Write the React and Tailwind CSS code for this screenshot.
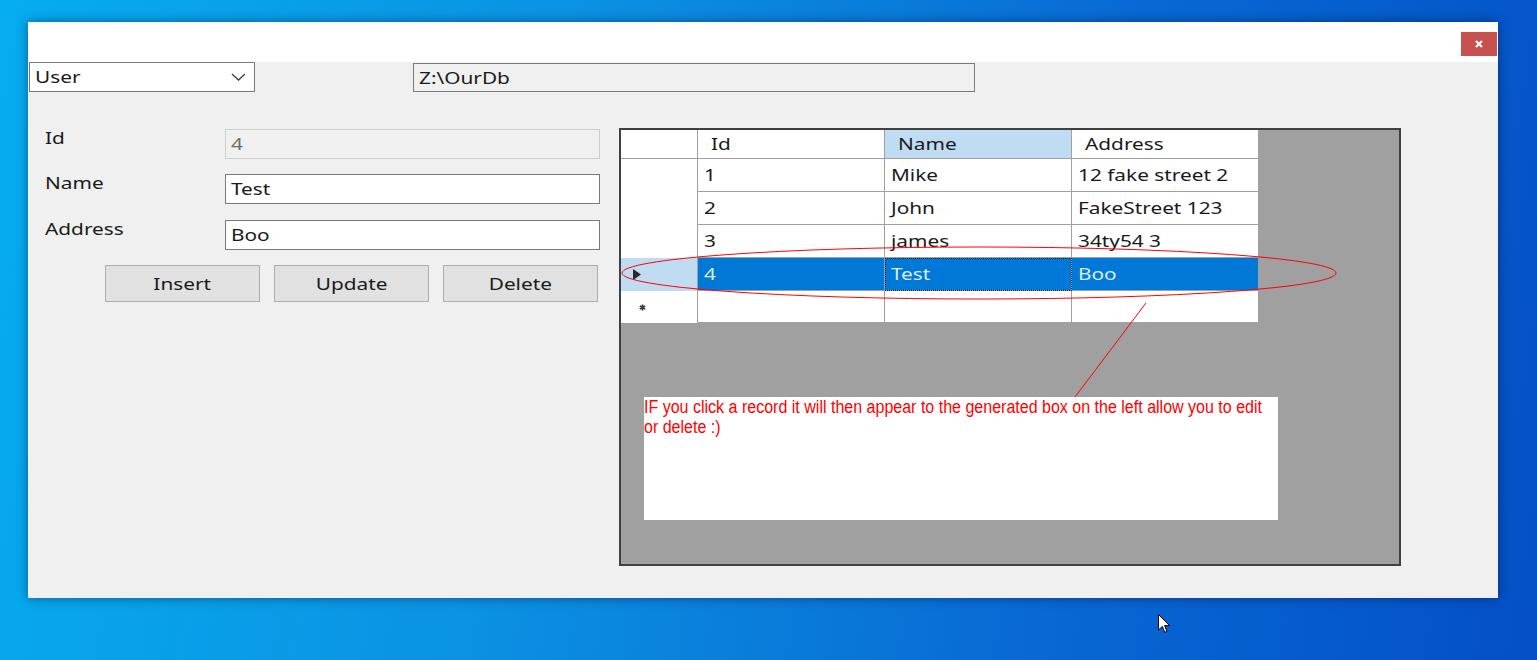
import React from 'react'

const rows = [
  { id: '1', name: 'Mike', address: '12 fake street 2' },
  { id: '2', name: 'John', address: 'FakeStreet 123' },
  { id: '3', name: 'james', address: '34ty54 3' },
  { id: '4', name: 'Test', address: 'Boo', selected: true },
]

// the screenshot is stretched sideways, so the text is too
function W({ children, center }) {
  return (
    <span
      className={
        center
          ? 'inline-block origin-center scale-x-[1.3] whitespace-nowrap'
          : 'inline-block origin-left scale-x-[1.3] whitespace-nowrap'
      }
    >
      {children}
    </span>
  )
}

function Field({ label, value, disabled, top }) {
  return (
    <div className={`flex items-start ${top}`}>
      <div className="w-[180px] leading-[18px]">
        <W>{label}</W>
      </div>
      <div
        className={
          disabled
            ? 'flex h-[30px] w-[375px] items-center border border-[#cccccc] bg-[#f0f0f0] pl-[5px] text-[#6d6d6d]'
            : 'flex h-[30px] w-[375px] items-center border border-[#7a7a7a] bg-white pl-[5px]'
        }
      >
        <W>{value}</W>
      </div>
    </div>
  )
}

function Btn({ children }) {
  return (
    <button className="flex h-[37px] w-[155px] items-center justify-center border border-[#adadad] bg-[#e1e1e1]">
      <W center>{children}</W>
    </button>
  )
}

function Grid() {
  return (
    <div className="relative h-[438px] w-[782px] shrink-0 border-2 border-[#404040] bg-[#a0a0a0]">
      {/* header */}
      <div className="flex h-[29px] w-[638px] border-b border-[#a0a0a0] bg-white">
        <div className="w-[77px] border-r border-[#a0a0a0]" />
        <div className="flex w-[187px] items-center border-r border-[#a0a0a0] pl-[13px]">
          <W>Id</W>
        </div>
        <div className="flex w-[187px] items-center border-r border-[#a0a0a0] bg-[#bfdcf3] pl-[13px]">
          <W>Name</W>
        </div>
        <div className="flex w-[187px] items-center border-r border-[#a0a0a0] pl-[13px]">
          <W>Address</W>
        </div>
      </div>

      {rows.map((r) => (
        <div key={r.id} className="flex h-[33px] w-[638px]">
          <div
            className={
              r.selected
                ? 'flex w-[77px] items-center border-r border-[#a0a0a0] bg-[#bfdcf3] pl-[12px]'
                : 'w-[77px] border-r border-[#a0a0a0] bg-white'
            }
          >
            {r.selected && (
              <svg width="8" height="11" viewBox="0 0 8 11">
                <path d="M0 0 L8 5.5 L0 11 Z" fill="#2a2a2a" />
              </svg>
            )}
          </div>
          <div
            className={
              r.selected
                ? 'flex w-[187px] items-center border-r border-b border-[#a0a0a0] bg-[#0078d7] pl-[6px] text-[#dcecfa]'
                : 'flex w-[187px] items-center border-r border-b border-[#a0a0a0] bg-white pl-[6px]'
            }
          >
            <W>{r.id}</W>
          </div>
          <div
            className={
              r.selected
                ? 'flex w-[187px] items-center border-r border-b border-[#a0a0a0] bg-[#0078d7] pl-[6px] text-[#dcecfa] outline-1 outline-dotted outline-[#1a1a1a] -outline-offset-1'
                : 'flex w-[187px] items-center border-r border-b border-[#a0a0a0] bg-white pl-[6px]'
            }
          >
            <W>{r.name}</W>
          </div>
          <div
            className={
              r.selected
                ? 'flex w-[187px] items-center border-r border-b border-[#a0a0a0] bg-[#0078d7] pl-[6px] text-[#dcecfa]'
                : 'flex w-[187px] items-center border-r border-b border-[#a0a0a0] bg-white pl-[6px]'
            }
          >
            <W>{r.address}</W>
          </div>
        </div>
      ))}

      {/* new row */}
      <div className="flex h-[32px] w-[638px]">
        <div className="flex w-[77px] items-center border-r border-[#a0a0a0] bg-white pl-[18px]">
          <svg width="7" height="7" viewBox="0 0 7 7">
            <path d="M3.5 0.5 V6.5 M0.8 2 L6.2 5 M0.8 5 L6.2 2" stroke="#3a3a3a" strokeWidth="1.7" />
          </svg>
        </div>
        <div className="w-[187px] border-r border-b border-[#a0a0a0] bg-white" />
        <div className="w-[187px] border-r border-b border-[#a0a0a0] bg-white" />
        <div className="w-[187px] border-r border-b border-[#a0a0a0] bg-white" />
      </div>

      {/* note pasted on the screenshot */}
      <div className="absolute left-[23px] top-[267px] h-[123px] w-[634px] bg-white font-['Liberation_Sans',sans-serif] text-[18px] leading-[20px] text-[#ff0000]">
        <div className="origin-left scale-x-[0.89] whitespace-nowrap">
          IF you click a record it will then appear to the generated box on the left allow you to edit
        </div>
        <div className="origin-left scale-x-[0.89] whitespace-nowrap">or delete :)</div>
      </div>
    </div>
  )
}

export default function App() {
  return (
    <div className="relative h-[660px] w-[1537px] overflow-hidden bg-[linear-gradient(100deg,#06acf0_0%,#0b92e2_35%,#0868d4_70%,#0450c4_100%)] pl-[28px] pt-[22px]">
      <div className="flex h-[576px] w-[1470px] flex-col bg-[#f0f0f0] font-['Noto_Sans',sans-serif] text-[16px] text-[#1a1a1a] shadow-[0_0_10px_rgba(0,0,40,0.45)]">
        {/* title bar */}
        <div className="flex h-[40px] shrink-0 items-start justify-end bg-white pr-[1px] pt-[10px]">
          <div className="flex h-[24px] w-[36px] items-center justify-center bg-[#c75050]">
            <svg width="8" height="8" viewBox="0 0 8 8">
              <path d="M1 1 L7 7 M7 1 L1 7" stroke="white" strokeWidth="2" />
            </svg>
          </div>
        </div>

        {/* body */}
        <div className="relative flex-1">
          <div className="flex items-start">
            <div className="ml-[1px] flex h-[30px] w-[226px] items-center justify-between border border-[#7a7a7a] bg-white pl-[5px] pr-[8px]">
              <W>User</W>
              <svg width="15" height="8" viewBox="0 0 15 8">
                <polyline points="1,1 7.5,7 14,1" fill="none" stroke="#404040" strokeWidth="1.3" />
              </svg>
            </div>
            <div className="ml-[158px] mt-[1px] flex h-[29px] w-[562px] items-center border border-[#7a7a7a] bg-[#f0f0f0] pl-[5px]">
              <W>Z:\OurDb</W>
            </div>
          </div>

          <div className="mt-[36px] flex">
            <div className="w-[591px] shrink-0 pl-[17px]">
              <Field label="Id" value="4" disabled top="mt-[1px]" />
              <Field label="Name" value="Test" top="mt-[15px]" />
              <Field label="Address" value="Boo" top="mt-[16px]" />
              <div className="ml-[60px] mt-[15px] flex gap-[14px]">
                <Btn>Insert</Btn>
                <Btn>Update</Btn>
                <Btn>Delete</Btn>
              </div>
            </div>
            <Grid />
          </div>

          {/* red annotation */}
          <svg className="pointer-events-none absolute left-0 top-0 h-full w-full">
            <ellipse cx="951" cy="211" rx="357" ry="26" fill="none" stroke="#ff0000" strokeWidth="1" />
            <line x1="1118" y1="241" x2="1047" y2="335" stroke="#ff0000" strokeWidth="1" />
          </svg>
        </div>
      </div>

      {/* mouse pointer */}
      <svg className="absolute left-[1158px] top-[614px]" width="13" height="20" viewBox="0 0 13 20">
        <path d="M0.5 0.5 L0.5 16 L4.3 12.4 L6.8 18.3 L9 17.4 L6.6 11.6 L11.6 11.6 Z" fill="white" stroke="#000" strokeWidth="1" />
      </svg>
    </div>
  )
}
